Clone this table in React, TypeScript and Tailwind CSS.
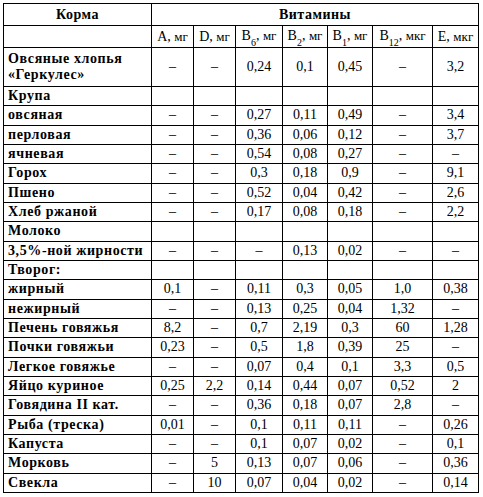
import React from "react";

type Row = { name: React.ReactNode; vals?: string[]; tall?: boolean };

const D = "–";

const rows: Row[] = [
  { name: (<><div>Овсяные хлопья</div><div>«Геркулес»</div></>), vals: [D, D, "0,24", "0,1", "0,45", D, "3,2"], tall: true },
  { name: "Крупа" },
  { name: "овсяная", vals: [D, D, "0,27", "0,11", "0,49", D, "3,4"] },
  { name: "перловая", vals: [D, D, "0,36", "0,06", "0,12", D, "3,7"] },
  { name: "ячневая", vals: [D, D, "0,54", "0,08", "0,27", D, D] },
  { name: "Горох", vals: [D, D, "0,3", "0,18", "0,9", D, "9,1"] },
  { name: "Пшено", vals: [D, D, "0,52", "0,04", "0,42", D, "2,6"] },
  { name: "Хлеб ржаной", vals: [D, D, "0,17", "0,08", "0,18", D, "2,2"] },
  { name: "Молоко" },
  { name: "3,5%-ной жирности", vals: [D, D, D, "0,13", "0,02", D, D] },
  { name: "Творог:" },
  { name: "жирный", vals: ["0,1", D, "0,11", "0,3", "0,05", "1,0", "0,38"] },
  { name: "нежирный", vals: [D, D, "0,13", "0,25", "0,04", "1,32", D] },
  { name: "Печень говяжья", vals: ["8,2", D, "0,7", "2,19", "0,3", "60", "1,28"] },
  { name: "Почки говяжьи", vals: ["0,23", D, "0,5", "1,8", "0,39", "25", D] },
  { name: "Легкое говяжье", vals: [D, D, "0,07", "0,4", "0,1", "3,3", "0,5"] },
  { name: "Яйцо куриное", vals: ["0,25", "2,2", "0,14", "0,44", "0,07", "0,52", "2"] },
  { name: "Говядина II кат.", vals: [D, D, "0,36", "0,18", "0,07", "2,8", D] },
  { name: "Рыба (треска)", vals: ["0,01", D, "0,1", "0,11", "0,11", D, "0,26"] },
  { name: "Капуста", vals: [D, D, "0,1", "0,07", "0,02", D, "0,1"] },
  { name: "Морковь", vals: [D, "5", "0,13", "0,07", "0,06", D, "0,36"] },
  { name: "Свекла", vals: [D, "10", "0,07", "0,04", "0,02", D, "0,14"] },
];

const heads: [string, string | null, string][] = [
  ["A", null, "мг"],
  ["D", null, "мг"],
  ["B", "6", "мг"],
  ["B", "2", "мг"],
  ["B", "1", "мг"],
  ["B", "12", "мкг"],
  ["E", null, "мкг"],
];

const cell = "border border-black p-0 [font-family:Liberation_Serif,Times_New_Roman,serif]";

export default function App() {
  return (
    <div className="bg-white w-[483px] h-[497px] pt-[3px] pl-[3px] text-black [font-family:Liberation_Serif,Times_New_Roman,serif]">
      <table className="table-fixed border-collapse w-[476px] text-[14px] leading-[16px] [font-family:Liberation_Serif,Times_New_Roman,serif]">
        <colgroup>
          <col className="w-[148px]" />
          <col className="w-[42px]" />
          <col className="w-[42px]" />
          <col className="w-[47px]" />
          <col className="w-[45px]" />
          <col className="w-[45px]" />
          <col className="w-[60px]" />
          <col className="w-[46px]" />
        </colgroup>
        <tbody>
          <tr className="h-[22px]">
            <td className={`${cell} text-center font-bold tracking-[0.5px]`}>Корма</td>
            <td colSpan={7} className={`${cell} text-center font-bold tracking-[0.5px]`}>Витамины</td>
          </tr>
          <tr className="h-[22px]">
            <td className={cell}></td>
            {heads.map((h, i) => (
              <td key={i} className={`${cell} text-center whitespace-nowrap`}>
                {h[0]}
                {h[1] && <sub className="text-[10px] leading-none align-[-3px]">{h[1]}</sub>}
                , <span className="text-[13px]">{h[2]}</span>
              </td>
            ))}
          </tr>
          {rows.map((r, i) => (
            <tr key={i} className={r.tall ? "h-[39px]" : "h-[19.33px]"}>
              <td className={`${cell} font-bold !pl-[4px] whitespace-nowrap tracking-[0.6px]`}>{r.name}</td>
              {Array.from({ length: 7 }).map((_, j) => (
                <td key={j} className={`${cell} text-center`}>{r.vals ? r.vals[j] : ""}</td>
              ))}
            </tr>
          ))}
        </tbody>
      </table>
    </div>
  );
}
